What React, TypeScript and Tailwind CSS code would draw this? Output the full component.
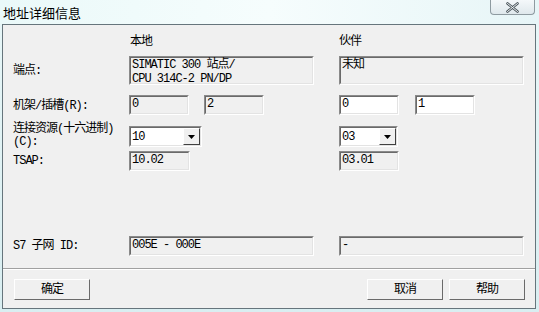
import React from "react";

const FONT = "font-['Liberation_Mono','Noto_Sans_CJK_SC',monospace]";

type BoxProps = {
  value: string;
  white?: boolean;
  className?: string;
};

function Field({ value, white, className = "" }: BoxProps) {
  return (
    <div
      className={`border border-t-[#8a8a8a] border-l-[#8a8a8a] border-b-white border-r-white ${className}`}
    >
      <div
        className={`h-full border border-t-[#6a6a6a] border-l-[#6a6a6a] border-b-[#e3e3e3] border-r-[#e3e3e3] pl-[1px] leading-[14px] whitespace-pre-line ${
          white ? "bg-white" : "bg-[#f0f0f0]"
        }`}
      >
        {value}
      </div>
    </div>
  );
}

function Combo({ value, className = "" }: { value: string; className?: string }) {
  return (
    <div
      className={`border border-t-[#8a8a8a] border-l-[#8a8a8a] border-b-white border-r-white ${className}`}
    >
      <div className="h-full flex bg-white border border-t-[#6a6a6a] border-l-[#6a6a6a] border-b-[#e3e3e3] border-r-[#e3e3e3]">
        <span className="flex-1 pl-[1px] pt-[2px] leading-[14px]">{value}</span>
        <div className="w-[17px] flex items-center justify-center bg-[#f0f0f0] border border-t-white border-l-white border-b-[#404040] border-r-[#404040]">
          <svg width="7" height="4" viewBox="0 0 7 4">
            <polygon points="0,0 7,0 3.5,4" fill="#000" />
          </svg>
        </div>
      </div>
    </div>
  );
}

function Button({ label, className = "" }: { label: string; className?: string }) {
  return (
    <div
      className={`h-[21px] w-[76px] flex items-center justify-center bg-[#f0f0f0] border border-t-white border-l-white border-b-[#6a6a6a] border-r-[#6a6a6a] ${className}`}
    >
      {label}
    </div>
  );
}

export default function App() {
  return (
    <div
      className={`w-[539px] h-[312px] overflow-hidden bg-gradient-to-b from-[#e8f7f8] to-[#d9eef1] text-[12px] text-black ${FONT} tracking-[-1px]`}
    >
      {/* Title bar */}
      <div className="h-[24px] flex items-start justify-between bg-gradient-to-r from-[#eaf9f9] via-[#f6fdfd] to-[#e7f5f7]">
        <span className="pl-[3px] pt-[3px] text-[13px] tracking-normal font-['Noto_Sans_CJK_SC',sans-serif]">
          地址详细信息
        </span>
        <div className="mr-[4px] w-[45px] h-[15px] flex items-center justify-center rounded-b-[4px] border border-t-0 border-[#8e9aa0] bg-gradient-to-b from-[#f4f8fa] to-[#dfe8ec]">
          <svg width="13" height="11" viewBox="0 0 13 11">
            <path
              d="M1.5 1.5 L11.5 9.5 M11.5 1.5 L1.5 9.5"
              stroke="#4a545a"
              strokeWidth="2.6"
              strokeLinecap="round"
            />
            <path
              d="M1.5 1.5 L11.5 9.5 M11.5 1.5 L1.5 9.5"
              stroke="#eef2f4"
              strokeWidth="1"
              strokeLinecap="round"
            />
          </svg>
        </div>
      </div>

      {/* Client area */}
      <div className="ml-[2px] w-[534px] h-[285px] bg-[#f0f0f0] border border-[#66757c] pl-[10px] pr-[10px]">
        <div className="grid grid-cols-[91px_185px_185px] gap-x-[25px]">
          {/* headers */}
          <div className="h-[30px]" />
          <div className="pt-[10px] leading-[14px] pl-[1px]">本地</div>
          <div className="pt-[10px] leading-[14px]">伙伴</div>

          {/* endpoint */}
          <div className="flex items-center h-[29px] mt-[1px] whitespace-nowrap">端点:</div>
          <Field value={"SIMATIC 300 站点/\nCPU 314C-2 PN/DP"} className="h-[29px] mt-[1px]" />
          <Field value="未知" className="h-[29px] mt-[1px]" />

          {/* rack / slot */}
          <div className="flex items-center h-[20px] mt-[10px] pt-[2px] whitespace-nowrap">机架/插槽(R):</div>
          <div className="flex gap-[15px] mt-[10px]">
            <Field value="0" className="w-[60px] h-[20px]" />
            <Field value="2" className="w-[60px] h-[20px]" />
          </div>
          <div className="flex gap-[16px] mt-[10px]">
            <Field value="0" white className="w-[60px] h-[20px]" />
            <Field value="1" white className="w-[60px] h-[20px]" />
          </div>

          {/* connection resource */}
          <div className="leading-[13px] mt-[8px] whitespace-nowrap">
            连接资源(十六进制)
            <br />
            (C):
          </div>
          <Combo value="10" className="w-[73px] h-[21px] mt-[11px]" />
          <Combo value="03" className="w-[59px] h-[21px] mt-[11px]" />

          {/* TSAP */}
          <div className="flex items-center h-[20px] mt-[2px]">TSAP:</div>
          <Field value="10.02" className="w-[61px] h-[20px] mt-[2px]" />
          <Field value="03.01" className="w-[60px] h-[20px] mt-[2px]" />

          {/* subnet id */}
          <div className="flex items-center h-[20px] mt-[65px] whitespace-nowrap">S7 子网 ID:</div>
          <Field value="005E - 000E" className="h-[20px] mt-[65px]" />
          <Field value="-" className="h-[20px] mt-[65px]" />
        </div>

        {/* separator */}
        <div className="-ml-[10px] -mr-[10px] mt-[12px] border-t border-t-[#a0a0a0] border-b border-b-white" />

        {/* buttons */}
        <div className="flex items-center mt-[9px] pl-[1px]">
          <Button label="确定" />
          <div className="flex-1" />
          <Button label="取消" />
          <Button label="帮助" className="ml-[6px]" />
        </div>
      </div>
    </div>
  );
}
